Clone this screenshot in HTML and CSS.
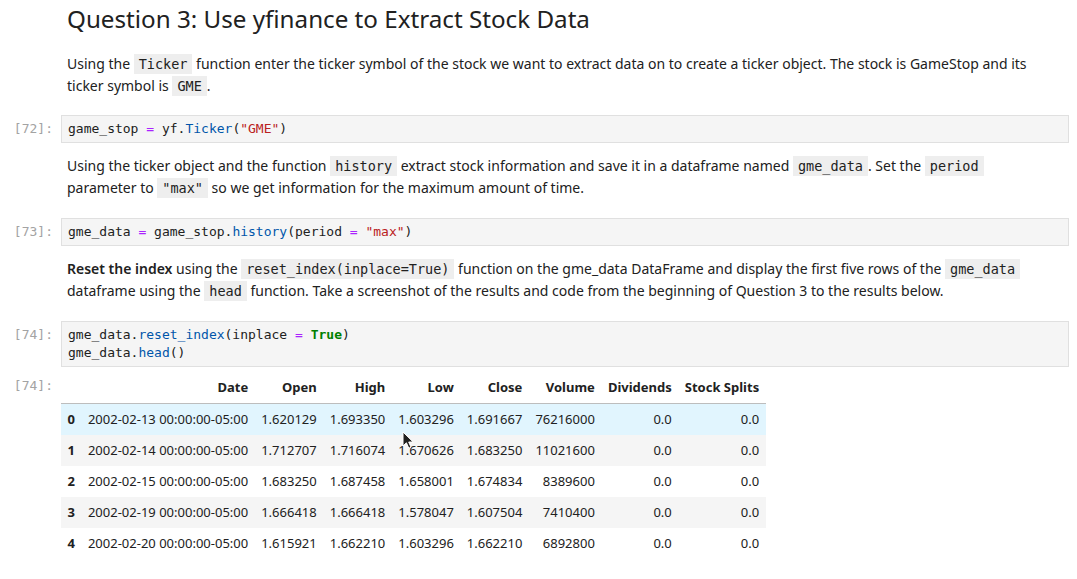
FILE: index.html
```html
<!DOCTYPE html>
<html lang="en">
<head>
<meta charset="utf-8">
<title>Question 3</title>
<link rel="stylesheet" href="styles.css">
</head>
<body>
<div class="notebook">
  <div class="cell md first">
    <div class="prompt"></div>
    <div class="md-body">
      <h2 class="heading">Question 3: Use yfinance to Extract Stock Data</h2>
      <p class="para">Using the <code class="ic">Ticker</code> function enter the ticker symbol of the stock we want to extract data on to create a ticker object. The stock is GameStop and its ticker symbol is <code class="ic">GME</code>.</p>
    </div>
  </div>

  <div class="cell code">
    <div class="prompt">[72]:</div>
    <div class="editor"><pre class="src">game_stop <span class="op">=</span> yf.<span class="prop">Ticker</span>(<span class="str">"GME"</span>)</pre></div>
  </div>

  <div class="cell md">
    <div class="prompt"></div>
    <div class="md-body">
      <p class="para">Using the ticker object and the function <code class="ic">history</code> extract stock information and save it in a dataframe named <code class="ic">gme_data</code>. Set the <code class="ic">period</code> parameter to <code class="ic">"max"</code> so we get information for the maximum amount of time.</p>
    </div>
  </div>

  <div class="cell code">
    <div class="prompt">[73]:</div>
    <div class="editor"><pre class="src">gme_data <span class="op">=</span> game_stop.<span class="prop">history</span>(period <span class="op">=</span> <span class="str">"max"</span>)</pre></div>
  </div>

  <div class="cell md">
    <div class="prompt"></div>
    <div class="md-body">
      <p class="para"><strong>Reset the index</strong> using the <code class="ic">reset_index(inplace=True)</code> function on the gme_data DataFrame and display the first five rows of the <code class="ic">gme_data</code> dataframe using the <code class="ic">head</code> function. Take a screenshot of the results and code from the beginning of Question 3 to the results below.</p>
    </div>
  </div>

  <div class="cell code">
    <div class="prompt">[74]:</div>
    <div class="editor"><pre class="src">gme_data.<span class="prop">reset_index</span>(inplace <span class="op">=</span> <span class="kw">True</span>)
gme_data.<span class="prop">head</span>()</pre></div>
  </div>

  <div class="cell output">
    <div class="prompt">[74]:</div>
    <div class="out">
      <table class="df">
        <thead>
          <tr><th></th><th>Date</th><th>Open</th><th>High</th><th>Low</th><th>Close</th><th>Volume</th><th>Dividends</th><th>Stock Splits</th></tr>
        </thead>
        <tbody>
          <tr class="hover"><th>0</th><td>2002-02-13 00:00:00-05:00</td><td>1.620129</td><td>1.693350</td><td>1.603296</td><td>1.691667</td><td>76216000</td><td>0.0</td><td>0.0</td></tr>
          <tr><th>1</th><td>2002-02-14 00:00:00-05:00</td><td>1.712707</td><td>1.716074</td><td>1.670626</td><td>1.683250</td><td>11021600</td><td>0.0</td><td>0.0</td></tr>
          <tr><th>2</th><td>2002-02-15 00:00:00-05:00</td><td>1.683250</td><td>1.687458</td><td>1.658001</td><td>1.674834</td><td>8389600</td><td>0.0</td><td>0.0</td></tr>
          <tr><th>3</th><td>2002-02-19 00:00:00-05:00</td><td>1.666418</td><td>1.666418</td><td>1.578047</td><td>1.607504</td><td>7410400</td><td>0.0</td><td>0.0</td></tr>
          <tr><th>4</th><td>2002-02-20 00:00:00-05:00</td><td>1.615921</td><td>1.662210</td><td>1.603296</td><td>1.662210</td><td>6892800</td><td>0.0</td><td>0.0</td></tr>
        </tbody>
      </table>
    </div>
  </div>
</div>
<svg class="cursor" width="13" height="19" viewBox="0 0 13 19" aria-hidden="true">
  <path d="M1 1 L1 15 L4.4 11.8 L6.8 17.2 L9 16.2 L6.7 11 L11.2 11 Z" fill="#1f1f1f" stroke="#ffffff" stroke-width="1" stroke-linejoin="round"/>
</svg>
</body>
</html>
```

FILE: styles.css
```css
html, body {
  margin: 0;
  padding: 0;
  background: #ffffff;
}

body {
  font-family: "Noto Sans", "DejaVu Sans", sans-serif;
  font-size: 14px;
  color: #212121;
  position: relative;
  width: 1077px;
  height: 579px;
  overflow: hidden;
}

.notebook {
  display: flex;
  flex-direction: column;
  padding-right: 8px;
}

.cell {
  display: flex;
  align-items: flex-start;
}

.prompt {
  width: 61px;
  flex-shrink: 0;
  box-sizing: border-box;
  padding: 5px 8px 0 0;
  text-align: right;
  font-family: "DejaVu Sans Mono", monospace;
  font-size: 13px;
  line-height: 18px;
  color: #a3a3a3;
}

/* markdown cells */
.md {
  padding: 12px 0 18px;
}

.md.first {
  padding: 0 0 17.2px;
}

.md-body {
  flex: 1;
  min-width: 0;
  padding: 0 20px 0 6px;
}

.heading {
  margin: 4px 0 0;
  font-size: 24.2px;
  line-height: 30px;
  font-weight: 400;
  color: #212121;
}

.para {
  margin: 0;
  line-height: 22.4px;
}

.heading + .para {
  margin-top: 19px;
}

.para strong {
  font-weight: 600;
}

.ic {
  font-family: "DejaVu Sans Mono", monospace;
  font-size: 13.5px;
  line-height: 1;
  background: #eeeeee;
  padding: 2px 5px;
  color: #212121;
}

/* code cells */
.editor {
  flex: 1;
  min-width: 0;
  background: #f5f5f5;
  border: 1px solid #e0e0e0;
  padding: 4px 6px;
}

.src {
  margin: 0;
  font-family: "DejaVu Sans Mono", monospace;
  font-size: 13px;
  line-height: 18px;
  color: #212121;
}

.op { color: #aa22ff; }
.prop { color: #0055aa; }
.str { color: #ba2121; }
.kw { color: #008000; font-weight: 700; }

/* output */
.output {
  margin-top: 5px;
}

.out {
  flex: 1;
  min-width: 0;
}

.df {
  border-collapse: separate;
  border-spacing: 0;
  font-family: "Noto Sans", "DejaVu Sans", sans-serif;
  font-size: 13px;
  color: #212121;
}

.df th,
.df td {
  padding: 6.5px;
  line-height: 18px;
  text-align: right;
  white-space: nowrap;
  vertical-align: middle;
}

.df th {
  font-weight: 700;
}

.df thead th {
  border-bottom: 1px solid #bdbdbd;
}

.df tbody tr:nth-child(even) {
  background: #f5f5f5;
}

.df tbody tr.hover {
  background: #e1f5fe;
}

.cursor {
  position: absolute;
  left: 402px;
  top: 431px;
}
```
